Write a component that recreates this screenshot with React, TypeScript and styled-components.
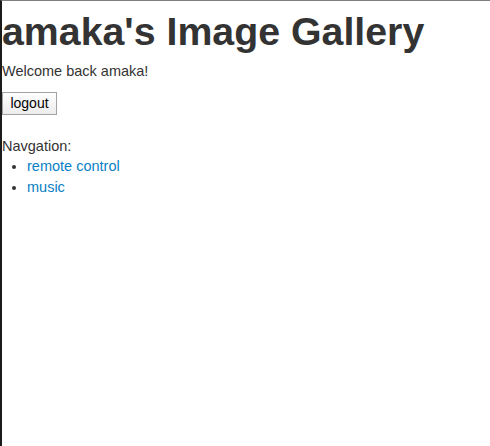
import React from "react";
import styled, { createGlobalStyle } from "styled-components";

const Global = createGlobalStyle`
  html, body { margin: 0; padding: 0; background: #ffffff; }
  body {
    font-family: "Liberation Sans", Arial, Helvetica, sans-serif;
    font-size: 14.5px;
    line-height: 20px;
    color: #333333;
  }
`;

const Frame = styled.div`
  box-sizing: border-box;
  min-height: 446px;
  border-top: 1px solid #7f7f7f;
  border-left: 2px solid #1b1b1b;
`;

const Title = styled.h1`
  margin: 10px 0;
  font-size: 39.3px;
  line-height: 40px;
  font-weight: bold;
  color: #333333;
`;

const Paragraph = styled.p`
  margin: 0 0 10px;
`;

const Form = styled.form`
  margin: 0 0 21px;
  display: flex;
`;

const Button = styled.button`
  box-sizing: border-box;
  height: 23px;
  width: 55px;
  margin: 1px 0 0;
  padding: 0;
  border: 1px solid #a3a3a3;
  border-radius: 0;
  background: linear-gradient(#ffffff, #ececec);
  font-family: "Liberation Sans", Arial, sans-serif;
  font-size: 14px;
  line-height: 21px;
  color: #000000;
`;

const Label = styled.div``;

const NavList = styled.ul`
  margin: 0 0 10px 25px;
  padding: 0;
  list-style: disc;
  line-height: 21px;
`;

const NavLink = styled.a`
  color: #0a7fc6;
  text-decoration: none;
`;

export default function App() {
  return (
    <>
      <Global />
      <Frame>
        <Title>amaka's Image Gallery</Title>
        <Paragraph>Welcome back amaka!</Paragraph>
        <Form onSubmit={(e) => e.preventDefault()}>
          <Button type="submit">logout</Button>
        </Form>
        <Label>Navgation:</Label>
        <NavList>
          <li>
            <NavLink href="#">remote control</NavLink>
          </li>
          <li>
            <NavLink href="#">music</NavLink>
          </li>
        </NavList>
      </Frame>
    </>
  );
}
